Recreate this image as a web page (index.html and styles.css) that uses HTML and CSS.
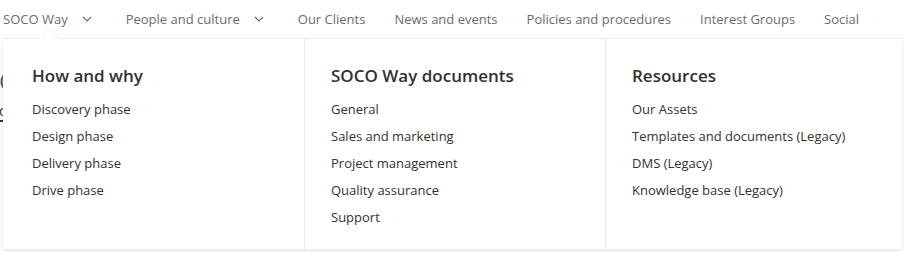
FILE: index.html
```html
<!DOCTYPE html>
<html lang="en">
  <head>
    <meta charset="UTF-8" />
    <meta name="viewport" content="width=device-width, initial-scale=1.0" />
    <title>SOCO Way</title>
    <link rel="stylesheet" href="styles.css">
  </head>
  <body>
    <nav class="topnav">
      <div class="nav-item">
        <span class="nav-label">SOCO Way</span>
        <span class="chevron">
          <svg width="10" height="6" viewBox="0 0 10 6"><path d="M1 1l4 4 4-4" fill="none" stroke="#6b6968" stroke-width="1.1"/></svg>
        </span>
      </div>
      <div class="nav-item">
        <span class="nav-label">People and culture</span>
        <span class="chevron">
          <svg width="10" height="6" viewBox="0 0 10 6"><path d="M1 1l4 4 4-4" fill="none" stroke="#6b6968" stroke-width="1.1"/></svg>
        </span>
      </div>
      <div class="nav-item"><span class="nav-label">Our Clients</span></div>
      <div class="nav-item"><span class="nav-label">News and events</span></div>
      <div class="nav-item"><span class="nav-label">Policies and procedures</span></div>
      <div class="nav-item"><span class="nav-label">Interest Groups</span></div>
      <div class="nav-item"><span class="nav-label">Social</span></div>
    </nav>

    <main class="page">
      <h2 class="page-title">Company</h2>
      <a class="page-link" href="#">contact</a>
    </main>

    <div class="megamenu">
      <div class="beak"></div>
      <div class="menu-col menu-col-first">
        <h3>How and why</h3>
        <ul>
          <li>Discovery phase</li>
          <li>Design phase</li>
          <li>Delivery phase</li>
          <li>Drive phase</li>
        </ul>
      </div>
      <div class="menu-col">
        <h3>SOCO Way documents</h3>
        <ul>
          <li>General</li>
          <li>Sales and marketing</li>
          <li>Project management</li>
          <li>Quality assurance</li>
          <li>Support</li>
        </ul>
      </div>
      <div class="menu-col">
        <h3>Resources</h3>
        <ul>
          <li>Our Assets</li>
          <li>Templates and documents (Legacy)</li>
          <li>DMS (Legacy)</li>
          <li>Knowledge base (Legacy)</li>
        </ul>
      </div>
    </div>
  </body>
</html>
```

FILE: styles.css
```css
body {
  margin: 0;
  font-family: "Segoe UI", "Open Sans", sans-serif;
  background: #fff;
  color: #323130;
  position: relative;
  height: 253px;
  overflow: hidden;
}

.topnav {
  display: flex;
  align-items: center;
  height: 38px;
  padding-left: 3px;
  gap: 29px;
}
.nav-item {
  display: flex;
  align-items: center;
  font-size: 13px;
  color: #6d6b6a;
  white-space: nowrap;
}
.chevron {
  display: flex;
  justify-content: center;
  align-items: center;
  width: 20px;
  margin-left: 9px;
  margin-right: -28px;
  padding-right: 28px;
  box-sizing: content-box;
}

.page {
  padding: 26px 0 0 0;
  margin-left: -1px;
}
.page-title {
  margin: 0;
  font-size: 24px;
  font-weight: 400;
  color: #605e5c;
}
.page-link {
  display: inline-block;
  margin-top: 4px;
  font-size: 14px;
  color: #323130;
  border-bottom: 2px solid #323130;
  text-decoration: none;
}

.megamenu {
  position: absolute;
  top: 38px;
  left: 3px;
  width: 899px;
  height: 211px;
  background: #fff;
  display: grid;
  grid-template-columns: 301px 301px 1fr;
  box-shadow: 0 1.6px 3.6px rgba(0, 0, 0, 0.13), 0 0.3px 0.9px rgba(0, 0, 0, 0.11);
  border-top: 1px solid #edebe9;
  box-sizing: border-box;
}
.beak {
  position: absolute;
  top: -7px;
  left: 40px;
  width: 13px;
  height: 13px;
  background: #fff;
  transform: rotate(45deg);
  box-shadow: -1px -1px 2px rgba(0, 0, 0, 0.06);
}
.menu-col {
  position: relative;
  padding: 25px 0 0 26px;
  border-left: 1px solid #edebe9;
}
.menu-col-first {
  border-left: none;
  padding-left: 29px;
}
.menu-col h3 {
  margin: 0 0 8px;
  font-size: 17px;
  font-weight: 600;
  line-height: 24px;
  color: #323130;
}
.menu-col ul {
  list-style: none;
  margin: 0;
  padding: 0;
}
.menu-col li {
  font-size: 13px;
  line-height: 27px;
  color: #323130;
}
```
